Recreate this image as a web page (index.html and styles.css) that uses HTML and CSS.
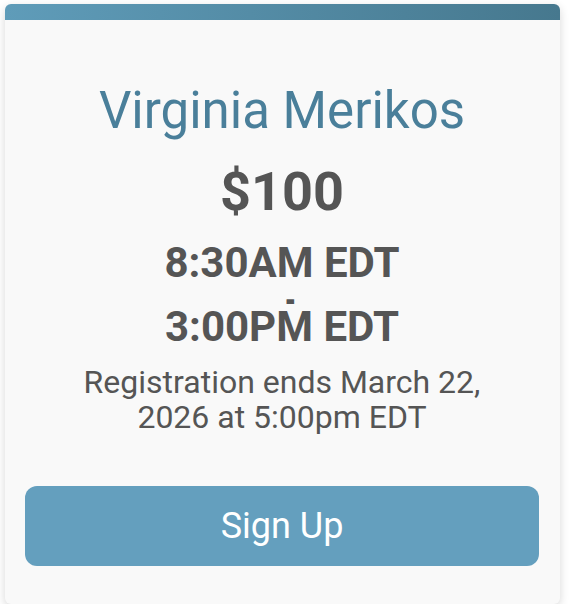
FILE: index.html
```html
<!DOCTYPE html>
<html>
<head>
<meta charset="utf-8">
<link rel="stylesheet" href="styles.css">
</head>
<body>
<div class="card">
  <div class="card-bar"></div>
  <div class="card-body">
    <h2 class="name">Virginia Merikos</h2>
    <div class="price">$100</div>
    <div class="time">8:30AM EDT<br><span class="dash">-</span><br>3:00PM EDT</div>
    <p class="reg">Registration ends March 22, 2026 at 5:00pm EDT</p>
    <button class="signup">Sign Up</button>
  </div>
</div>
</body>
</html>
```

FILE: styles.css
```css
html, body {
  margin: 0;
  padding: 0;
  background: #ffffff;
}
body {
  padding: 4px 10px 0 5px;
  font-family: Roboto, "Liberation Sans", sans-serif;
}
.card {
  width: 555px;
  height: 600px;
  background: #f9f9f9;
  border-radius: 6px;
  box-shadow: 0 3px 10px rgba(0,0,0,0.16);
  overflow: hidden;
  display: flex;
  flex-direction: column;
}
.card-bar {
  height: 16px;
  flex: none;
  background: linear-gradient(90deg, #5f9cb9, #46788e);
}
.card-body {
  padding: 0 21px 0 20px;
  display: flex;
  flex-direction: column;
  align-items: center;
  text-align: center;
  color: #555555;
}
.name {
  margin: 61px 0 0;
  font-size: 51px;
  font-weight: 400;
  line-height: 60px;
  color: #4a7f9a;
}
.price {
  margin-top: 21px;
  font-size: 54px;
  font-weight: 700;
  line-height: 60px;
}
.time {
  margin-top: 25px;
  font-size: 42px;
  font-weight: 700;
  line-height: 32px;
}
.dash {
  display: inline-block;
  margin-left: 16px;
  transform: translateY(6px) scaleX(0.65);
}
.reg {
  margin: 22px 0 0;
  max-width: 440px;
  font-size: 32px;
  line-height: 35px;
}
.signup {
  margin-top: 51px;
  width: 100%;
  height: 80px;
  flex: none;
  border: none;
  border-radius: 12px;
  background: #649fbe;
  color: #ffffff;
  font-family: Roboto, "Liberation Sans", sans-serif;
  font-size: 36px;
  padding: 0;
}
```
